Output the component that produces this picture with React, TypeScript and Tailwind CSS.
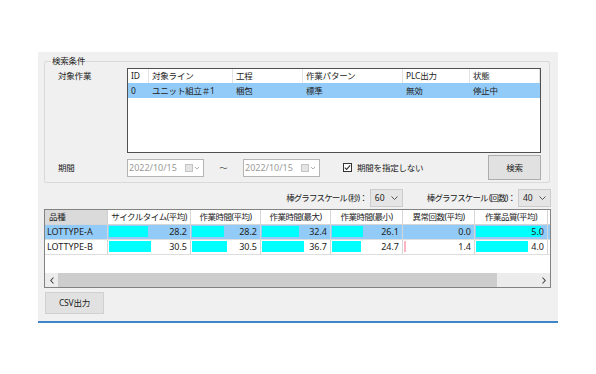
import React from "react"

type LvCol = { label: string; w: string; value: string }

const lvCols: LvCol[] = [
    { label: "ID", w: "w-[21px]", value: "0" },
    { label: "対象ライン", w: "w-[84px]", value: "ユニット組立＃1" },
    { label: "工程", w: "w-[70px]", value: "梱包" },
    { label: "作業パターン", w: "w-[100px]", value: "標準" },
    { label: "PLC出力", w: "w-[67px]", value: "無効" },
    { label: "状態", w: "w-[70px]", value: "停止中" },
]

type GridCol = { label: string; w: string; px: number; scale: number; bar: string }

const gridCols: GridCol[] = [
    { label: "サイクルタイム(平均)", w: "w-[83px]", px: 83, scale: 60, bar: "bg-[#00ffff]" },
    { label: "作業時間(平均)", w: "w-[70px]", px: 70, scale: 60, bar: "bg-[#00ffff]" },
    { label: "作業時間(最大)", w: "w-[70px]", px: 70, scale: 60, bar: "bg-[#00ffff]" },
    { label: "作業時間(最小)", w: "w-[72px]", px: 72, scale: 60, bar: "bg-[#00ffff]" },
    { label: "異常回数(平均)", w: "w-[72px]", px: 72, scale: 40, bar: "bg-[#ffb4c4]" },
    { label: "作業品質(平均)", w: "w-[73px]", px: 73, scale: 5.5, bar: "bg-[#00ffff]" },
]

const rows = [
    { name: "LOTTYPE-A", selected: true, values: [28.2, 28.2, 32.4, 26.1, 0.0, 5.0] },
    { name: "LOTTYPE-B", selected: false, values: [30.5, 30.5, 36.7, 24.7, 1.4, 4.0] },
]

const DatePicker = () => (
    <div className="w-[77px] h-[18px] bg-white border border-[#b4b4b4] flex items-center pl-[1px] pr-[4px] text-[#9a9a9a] tracking-normal">
        <span className="flex-1 text-[9px]">2022/10/15</span>
        <svg width="14" height="8" viewBox="0 0 14 8">
            <rect x="0.5" y="0.5" width="7" height="7" fill="#e4e4e4" stroke="#c4c4c4" />
            <path d="M10 3 L12 5 L14 3" fill="none" stroke="#b0b0b0" strokeWidth="1" />
        </svg>
    </div>
)

const Combo = ({ value }: { value: string }) => (
    <div className="ml-[3px] w-[33px] h-[18px] bg-[#e5e5e5] border border-[#cccccc] flex items-center pl-[4px] pr-[4px] tracking-normal">
        <span className="flex-1">{value}</span>
        <svg width="7" height="4" viewBox="0 0 7 4">
            <path d="M0.5 0.5 L3.5 3.5 L6.5 0.5" fill="none" stroke="#555" strokeWidth="1" />
        </svg>
    </div>
)

const App = () => {
    return (
        <div className="w-[596px] h-[374px] bg-white overflow-hidden pt-[52px] pl-[38px] font-['Noto_Sans','Noto_Sans_CJK_JP',sans-serif] text-[8.5px] leading-[12px] tracking-[-0.2px] text-[#222]">
            <div className="w-[520px] h-[271px] bg-[#f0f0f0] border-b-2 border-[#3f86c8] pl-[6px] pr-[7px] pt-[3px] flex flex-col">
                <fieldset className="border border-[#d9d9d9] rounded-[2px] mr-[1px] pb-[2px] min-w-0">
                    <legend className="ml-[6px] px-[1px] leading-[12px]">検索条件</legend>

                    <div className="flex mt-[1px]">
                        <div className="w-[82px] pl-[13px] pt-[2px]">対象作業</div>
                        <div className="w-[414px] h-[85px] border border-[#505050] bg-white">
                            <div className="flex h-[14px] items-center">
                                {lvCols.map((c) => (
                                    <div key={c.label} className={`${c.w} h-full pl-[3px] border-r border-[#e3e3e3] flex items-center whitespace-nowrap`}>
                                        {c.label}
                                    </div>
                                ))}
                            </div>
                            <div className="flex h-[15px] bg-[#93cbf8]">
                                {lvCols.map((c) => (
                                    <div key={c.label} className={`${c.w} h-full pl-[3px] flex items-center whitespace-nowrap`}>
                                        {c.value}
                                    </div>
                                ))}
                            </div>
                        </div>
                    </div>

                    <div className="flex items-center h-[25px] mt-[2px]">
                        <div className="w-[82px] pl-[13px]">期間</div>
                        <DatePicker/>
                        <div className="w-[39px] text-center text-[#555]">～</div>
                        <DatePicker/>
                        <div className="ml-[23px] flex items-center gap-[5px]">
                            <svg width="9" height="9" viewBox="0 0 9 9">
                                <rect x="0.5" y="0.5" width="8" height="8" fill="#fff" stroke="#333" />
                                <path d="M1.8 4.6 L3.6 6.4 L7.2 2.4" fill="none" stroke="#333" strokeWidth="1.1" />
                            </svg>
                            <span>期間を指定しない</span>
                        </div>
                        <button className="ml-auto mr-[8px] w-[53px] h-[25px] bg-[#e1e1e1] border border-[#adadad] text-[8.5px]">
                            検索
                        </button>
                    </div>
                </fieldset>

                <div className="flex items-center justify-end h-[18px] mt-[6px] whitespace-nowrap">
                    <span className="tracking-[-0.9px]">棒グラフスケール (秒)：</span>
                    <Combo value="60"/>
                    <span className="ml-[24px] tracking-[-0.9px]">棒グラフスケール (回数)：</span>
                    <Combo value="40"/>
                </div>

                <div className="mt-[2px] w-[507px] h-[79px] border border-[#828282] bg-white flex flex-col">
                    <div className="flex h-[15px] border-b border-[#d6d6d6] whitespace-nowrap">
                        <div className="w-[63px] h-full bg-[#dadada] pl-[4px] border-r border-[#cfcfcf] flex items-center">品種</div>
                        {gridCols.map((c) => (
                            <div key={c.label} className={`${c.w} h-full border-r border-[#d6d6d6] flex items-center justify-center overflow-hidden tracking-[-0.5px]`}>
                                {c.label}
                            </div>
                        ))}
                    </div>

                    {rows.map((r) => (
                        <div key={r.name} className={`flex h-[15px] border-b border-[#dedede] text-[9px] tracking-normal ${r.selected ? "bg-[#93cbf8]" : "bg-white"}`}>
                            <div className="w-[63px] h-full pl-[2px] border-r border-[#d6d6d6] flex items-center">{r.name}</div>
                            {gridCols.map((c, i) => {
                                const v = r.values[i]
                                const barW = Math.min(c.px - 3, ((c.px - 1) * v) / c.scale)
                                return (
                                    <div key={c.label} className={`${c.w} h-full relative border-r border-[#d6d6d6] flex items-center justify-end pr-[3px]`}>
                                        {v > 0 && (
                                            <div className={`absolute left-[1px] top-[1px] h-[11px] ${c.bar}`} style={{ width: barW }}/>
                                        )}
                                        <span className="relative">{v.toFixed(1)}</span>
                                    </div>
                                )
                            })}
                        </div>
                    ))}

                    <div className="flex-1"/>

                    <div className="flex h-[14px] bg-[#ececec]">
                        <div className="w-[13px] h-full flex items-center justify-center">
                            <svg width="4" height="7" viewBox="0 0 4 7">
                                <path d="M3.5 0.5 L0.8 3.5 L3.5 6.5" fill="none" stroke="#444" strokeWidth="1.1" />
                            </svg>
                        </div>
                        <div className="w-[439px] h-full bg-[#cdcdcd]"/>
                        <div className="flex-1"/>
                        <div className="w-[13px] h-full flex items-center justify-center">
                            <svg width="4" height="7" viewBox="0 0 4 7">
                                <path d="M0.5 0.5 L3.2 3.5 L0.5 6.5" fill="none" stroke="#444" strokeWidth="1.1" />
                            </svg>
                        </div>
                    </div>
                </div>

                <button className="mt-[4px] ml-[1px] w-[59px] h-[22px] bg-[#e1e1e1] border border-[#d0d0d0] text-[8.5px]">
                    CSV出力
                </button>
            </div>
        </div>
    )
}

export default App
